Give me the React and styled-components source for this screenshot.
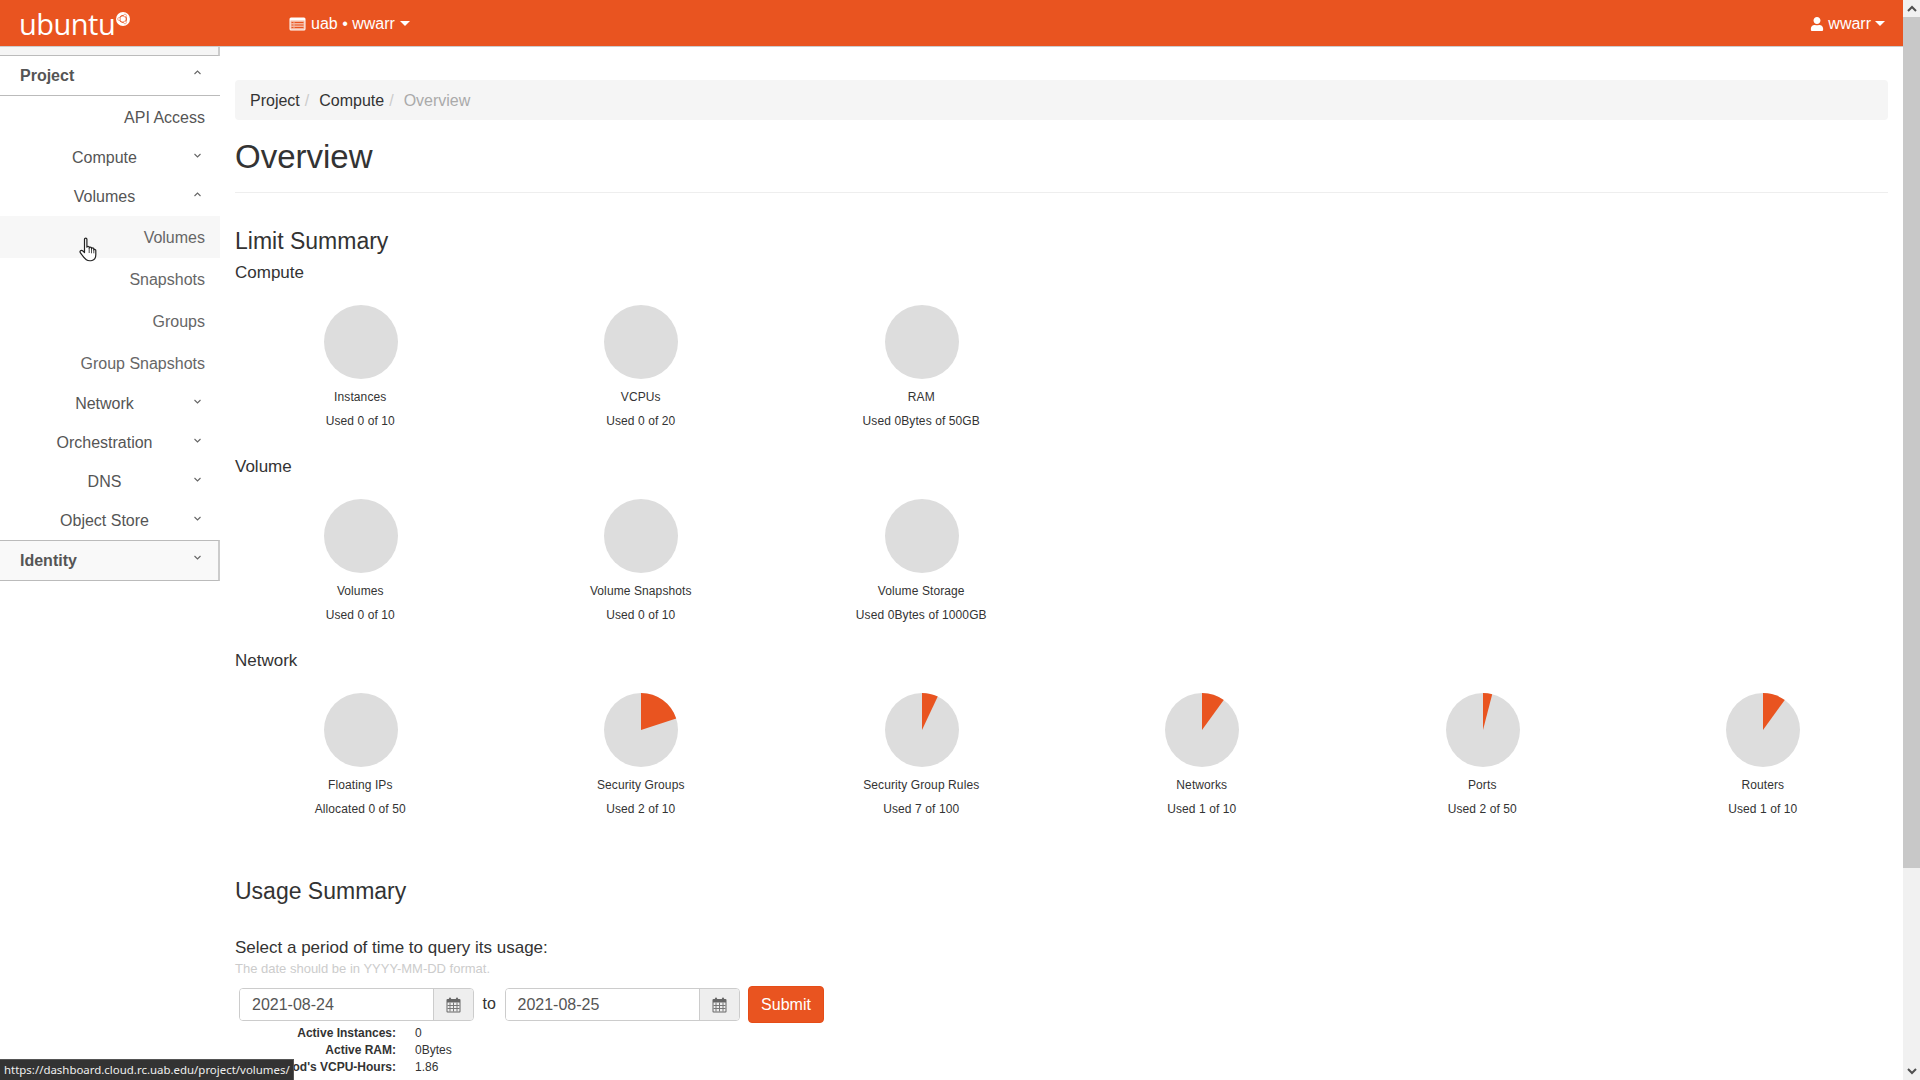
import React from 'react';
import styled, { createGlobalStyle } from 'styled-components';
import { FaUser } from 'react-icons/fa';

const ORANGE = '#e95420';

const GlobalStyle = createGlobalStyle`
  * { box-sizing: border-box; }
  html, body { margin: 0; height: 100%; overflow: hidden; background: #fff; }
  body { font-family: "Liberation Sans", Arial, sans-serif; font-size: 16px; color: #333; }
`;

const Viewport = styled.div`
  display: flex;
  height: 100vh;
  overflow: hidden;
`;

const Page = styled.div`
  flex: 1;
  min-width: 0;
  display: flex;
  flex-direction: column;
`;

const Navbar = styled.header`
  flex: none;
  height: 47px;
  background: ${ORANGE};
  border-bottom: 1px solid #ccc;
  display: flex;
  align-items: center;
  color: #fff;
  padding: 1px 18px 0 19px;
`;

const Brand = styled.div`
  display: flex;
  align-items: flex-start;
  width: 270px;
`;

const BrandText = styled.span`
  font-family: "Open Sans", sans-serif;
  font-weight: 400;
  font-size: 29px;
  line-height: 38px;
  letter-spacing: -0.5px;
`;

const BrandMark = styled.svg`
  width: 14px;
  height: 14px;
  margin: 7px 0 0 1px;
`;

const NavMenu = styled.div`
  display: flex;
  align-items: center;
  gap: ${(p) => p.$gap || '5px'};
  font-size: 16px;
  svg { flex: none; }
`;

const Caret = styled.span`
  width: 0;
  height: 0;
  border-top: 5px solid #fff;
  border-left: 5px solid transparent;
  border-right: 5px solid transparent;
`;

const Spacer = styled.div`
  flex: 1;
`;

const Body = styled.div`
  flex: 1;
  min-height: 0;
  display: flex;
`;

const Sidebar = styled.nav`
  flex: none;
  width: 220px;
  color: #555;
`;

const SidebarCap = styled.div`
  height: 9px;
  background: #f5f5f5;
  border-bottom: 1px solid #bbb;
  border-right: 2px solid #ccc;
`;

const Dashboard = styled.div`
  display: flex;
  align-items: center;
  justify-content: space-between;
  height: ${(p) => (p.$open ? '40px' : '41px')};
  padding: 0 ${(p) => (p.$open ? '19px' : '17px')} 0 20px;
  font-weight: bold;
  background: ${(p) => (p.$open ? '#fff' : '#f9f9f9')};
  border-bottom: 1px solid #bbb;
  ${(p) => !p.$open && 'border-top: 1px solid #bbb; border-right: 2px solid #ccc;'}
`;

const Panel = styled.div`
  display: flex;
  align-items: center;
  height: 39px;
  padding: 1px 19px 0 15px;
`;

const PanelLabel = styled.span`
  flex: 1;
  text-align: center;
`;

const Leaf = styled.div`
  position: relative;
  height: 42px;
  line-height: 44px;
  padding-right: 15px;
  text-align: right;
  color: ${(p) => (p.$top ? '#555' : '#666')};
  background: ${(p) => (p.$hover ? '#f7f7f7' : 'transparent')};
`;

const Cursor = styled.svg`
  position: absolute;
  left: 79px;
  top: 21px;
  width: 19px;
  height: 25px;
`;

const Chevron = styled.svg`
  flex: none;
  width: 7px;
  height: 5px;
  margin-bottom: 6px;
  fill: none;
  stroke: #666;
  stroke-width: 1.1;
`;

const Main = styled.main`
  flex: 1;
  min-width: 0;
  overflow: hidden;
  padding: 33px 15px 0;
`;

const Breadcrumb = styled.ol`
  display: flex;
  align-items: center;
  height: 40px;
  margin: 0 0 17px;
  padding: 1px 15px 0;
  list-style: none;
  background: #f5f5f5;
  border-radius: 4px;
`;

const Crumb = styled.li`
  color: ${(p) => (p.$active ? '#aaa' : '#333')};
  &:not(:first-child)::before {
    content: '/';
    padding: 0 5px;
    margin-right: 5px;
    color: #ccc;
  }
`;

const PageHeader = styled.h1`
  margin: 0 0 36px;
  padding-bottom: 15px;
  border-bottom: 1px solid #eee;
  font-size: 33px;
  font-weight: normal;
  line-height: 40px;
`;

const SectionTitle = styled.h2`
  margin: ${(p) => p.$top || 0} 0 9px;
  font-size: 23px;
  font-weight: normal;
  line-height: 25px;
`;

const GroupTitle = styled.h3`
  margin: 0 0 22px;
  font-size: 17px;
  font-weight: normal;
  line-height: 20px;
`;

const PieRow = styled.div`
  display: grid;
  grid-template-columns: repeat(6, 1fr);
  margin: 0 -15px;
  padding-bottom: 27px;
`;

const PieCell = styled.div`
  display: flex;
  flex-direction: column;
  align-items: center;
  font-size: 12px;
  line-height: 17px;
  letter-spacing: 0.1px;
`;

const PieSvg = styled.svg`
  width: 74px;
  height: 74px;
  margin: 0 0 10px 1px;
`;

const PieUsed = styled.div`
  margin-top: 7px;
`;

const Prompt = styled.p`
  margin: 35px 0 5px;
  font-size: 17px;
  line-height: 18px;
`;

const Hint = styled.p`
  margin: 0 0 10px;
  font-size: 13px;
  line-height: 14px;
  color: #ccc;
`;

const DateForm = styled.form`
  display: flex;
  align-items: center;
  height: 37px;
  padding-left: 4px;
`;

const DateGroup = styled.div`
  display: flex;
  width: 235px;
  height: 33px;
  border: 1px solid #ccc;
  border-radius: 4px;
  overflow: hidden;
`;

const DateInput = styled.input`
  flex: 1;
  min-width: 0;
  border: 0;
  padding: 0 12px;
  outline: 0;
  font: 16px "Liberation Sans", Arial, sans-serif;
  color: #555;
`;

const DateAddon = styled.span`
  flex: none;
  width: 40px;
  display: flex;
  align-items: center;
  justify-content: center;
  background: #eee;
  border-left: 1px solid #ccc;
`;

const To = styled.span`
  width: 30.5px;
  text-align: center;
  padding-bottom: 2px;
`;

const Submit = styled.button`
  height: 37px;
  width: 76px;
  margin-left: 8.5px;
  border: 1px solid #e64c17;
  border-radius: 4px;
  background: ${ORANGE};
  color: #fff;
  font: 16px "Liberation Sans", Arial, sans-serif;
`;

const Stats = styled.dl`
  display: grid;
  grid-template-columns: 161px 1fr;
  column-gap: 19px;
  margin: 2px 0 0;
  font-size: 12px;
  line-height: 17px;
`;

const StatLabel = styled.dt`
  font-weight: bold;
  text-align: right;
  white-space: nowrap;
`;

const StatValue = styled.dd`
  margin: 0;
`;

const LinkStatus = styled.div`
  position: fixed;
  left: 0;
  bottom: 0;
  height: 21px;
  width: 294px;
  padding: 0 4px;
  background: #333;
  border-top: 1px solid #555;
  border-right: 1px solid #555;
  color: #eee;
  font-family: "Noto Sans", "Open Sans", sans-serif;
  font-size: 11.45px;
  line-height: 19px;
  white-space: nowrap;
`;

const Scrollbar = styled.div`
  flex: none;
  width: 17px;
  display: flex;
  flex-direction: column;
  background: #f1f1f1;
`;

const ScrollButton = styled.div`
  flex: none;
  height: 17px;
  display: flex;
  align-items: center;
  justify-content: center;
`;

const ScrollThumb = styled.div`
  flex: none;
  height: 851px;
  background: #c8c8c8;
`;

const ScrollTrack = styled.div`
  flex: 1;
`;

const ScrollArrow = styled.svg`
  width: 10px;
  height: 7px;
  fill: none;
  stroke: #505050;
  stroke-width: 2;
`;

const ChevronIcon = ({ up }) => (
  <Chevron viewBox="0 0 7 5">
    <path d={up ? 'M0.5 4L3.5 1L6.5 4' : 'M0.5 1L3.5 4L6.5 1'} />
  </Chevron>
);

const UbuntuMark = () => (
  <BrandMark viewBox="0 0 30 30">
    <circle cx="15" cy="15" r="15" fill="#fff" />
    <circle cx="15" cy="15" r="7.2" fill="none" stroke={ORANGE} strokeWidth="2.6" />
    <circle cx="6.4" cy="15" r="3" fill="#fff" stroke={ORANGE} strokeWidth="1" />
    <circle cx="19.3" cy="7.6" r="3" fill="#fff" stroke={ORANGE} strokeWidth="1" />
    <circle cx="19.3" cy="22.4" r="3" fill="#fff" stroke={ORANGE} strokeWidth="1" />
  </BrandMark>
);

const TenantIcon = () => (
  <svg width="17" height="14" viewBox="0 0 17 14">
    <rect x="0.5" y="0.5" width="16" height="13" rx="1.5" fill="#fff" />
    <rect x="1.5" y="3.5" width="14" height="9" fill="#f4b49c" />
    <path d="M2.5 5.500h2M2.500 8h2M2.500 10.500h2" stroke={ORANGE} strokeWidth="1.200" />
    <path d="M5.500 5.500h9M5.500 8h9M5.500 10.500h9" stroke={ORANGE} strokeWidth="1.200" />
  </svg>
);

const HandCursor = () => (
  <Cursor viewBox="0 0 19 25">
    <path
      d="M5.5 2.2c0-1.5 2.4-1.5 2.4 0v8c0-1.3 2.3-1.3 2.3 0v.8c0-1.3 2.3-1.3 2.3 0v.8c0-1.3 2.3-1.3 2.3 0v1c.6-.7 2-.3 2 .8v4.200c0 2.600-1.200 5.200-3.800 5.700-2 .4-4.300.2-5.700-.8-1.500-1.100-5.200-5.900-6-7.100-1-1.500.9-3 2.300-1.800l1.900 1.700z"
      fill="#fff"
      stroke="#222"
      strokeWidth="1.200"
      strokeLinejoin="round"
    />
    <path d="M10.200 11v5M12.500 11.800v4.500M14.800 12.600v3.700" stroke="#222" strokeWidth="0.800" fill="none" />
  </Cursor>
);

const CalendarIcon = () => (
  <svg width="15" height="16" viewBox="0 0 15 16">
    <rect x="0.5" y="2" width="14" height="13.500" rx="1" fill="#666" />
    <rect x="1.500" y="5.500" width="12" height="9" fill="#eee" />
    <path d="M4 5.500v9M7.500 5.500v9M11 5.500v9M1.500 8.500h12M1.500 11.500h12" stroke="#777" strokeWidth="1" />
    <rect x="3" y="0.500" width="2" height="4" rx="1" fill="#666" />
    <rect x="10" y="0.500" width="2" height="4" rx="1" fill="#666" />
  </svg>
);

const Pie = ({ used, total }) => {
  const angle = (used / total) * 2 * Math.PI;
  const x = 37 + 37 * Math.sin(angle);
  const y = 37 - 37 * Math.cos(angle);
  return (
    <PieSvg viewBox="0 0 74 74">
      <circle cx="37" cy="37" r="37" fill="#ddd" />
      {used > 0 && <path d={`M37 37L37 0A37 37 0 0 1 ${x} ${y}Z`} fill={ORANGE} />}
    </PieSvg>
  );
};

const limits = [
  {
    title: 'Compute',
    pies: [
      { name: 'Instances', text: 'Used 0 of 10', used: 0, total: 10 },
      { name: 'VCPUs', text: 'Used 0 of 20', used: 0, total: 20 },
      { name: 'RAM', text: 'Used 0Bytes of 50GB', used: 0, total: 50 },
    ],
  },
  {
    title: 'Volume',
    pies: [
      { name: 'Volumes', text: 'Used 0 of 10', used: 0, total: 10 },
      { name: 'Volume Snapshots', text: 'Used 0 of 10', used: 0, total: 10 },
      { name: 'Volume Storage', text: 'Used 0Bytes of 1000GB', used: 0, total: 1000 },
    ],
  },
  {
    title: 'Network',
    pies: [
      { name: 'Floating IPs', text: 'Allocated 0 of 50', used: 0, total: 50 },
      { name: 'Security Groups', text: 'Used 2 of 10', used: 2, total: 10 },
      { name: 'Security Group Rules', text: 'Used 7 of 100', used: 7, total: 100 },
      { name: 'Networks', text: 'Used 1 of 10', used: 1, total: 10 },
      { name: 'Ports', text: 'Used 2 of 50', used: 2, total: 50 },
      { name: 'Routers', text: 'Used 1 of 10', used: 1, total: 10 },
    ],
  },
];

const DateField = ({ value }) => (
  <DateGroup>
    <DateInput defaultValue={value} />
    <DateAddon>
      <CalendarIcon />
    </DateAddon>
  </DateGroup>
);

export default function App() {
  return (
    <Viewport>
      <GlobalStyle />
      <Page>
        <Navbar>
          <Brand>
            <BrandText>ubuntu</BrandText>
            <UbuntuMark />
          </Brand>
          <NavMenu>
            <TenantIcon />
            <span>uab • wwarr</span>
            <Caret />
          </NavMenu>
          <Spacer />
          <NavMenu $gap="4px">
            <FaUser size={14} />
            <span>wwarr</span>
            <Caret />
          </NavMenu>
        </Navbar>
        <Body>
          <Sidebar>
            <SidebarCap />
            <Dashboard $open>
              Project
              <ChevronIcon up />
            </Dashboard>
            <Leaf $top>API Access</Leaf>
            <Panel>
              <PanelLabel>Compute</PanelLabel>
              <ChevronIcon />
            </Panel>
            <Panel>
              <PanelLabel>Volumes</PanelLabel>
              <ChevronIcon up />
            </Panel>
            <Leaf $hover>
              Volumes
              <HandCursor />
            </Leaf>
            <Leaf>Snapshots</Leaf>
            <Leaf>Groups</Leaf>
            <Leaf>Group Snapshots</Leaf>
            <Panel>
              <PanelLabel>Network</PanelLabel>
              <ChevronIcon />
            </Panel>
            <Panel>
              <PanelLabel>Orchestration</PanelLabel>
              <ChevronIcon />
            </Panel>
            <Panel>
              <PanelLabel>DNS</PanelLabel>
              <ChevronIcon />
            </Panel>
            <Panel>
              <PanelLabel>Object Store</PanelLabel>
              <ChevronIcon />
            </Panel>
            <Dashboard>
              Identity
              <ChevronIcon />
            </Dashboard>
          </Sidebar>
          <Main>
            <Breadcrumb>
              <Crumb>Project</Crumb>
              <Crumb>Compute</Crumb>
              <Crumb $active>Overview</Crumb>
            </Breadcrumb>
            <PageHeader>Overview</PageHeader>
            <SectionTitle>Limit Summary</SectionTitle>
            {limits.map((group) => (
              <section key={group.title}>
                <GroupTitle>{group.title}</GroupTitle>
                <PieRow>
                  {group.pies.map((pie) => (
                    <PieCell key={pie.name}>
                      <Pie used={pie.used} total={pie.total} />
                      <div>{pie.name}</div>
                      <PieUsed>{pie.text}</PieUsed>
                    </PieCell>
                  ))}
                </PieRow>
              </section>
            ))}
            <SectionTitle $top="34px">Usage Summary</SectionTitle>
            <Prompt>Select a period of time to query its usage:</Prompt>
            <Hint>The date should be in YYYY-MM-DD format.</Hint>
            <DateForm>
              <DateField value="2021-08-24" />
              <To>to</To>
              <DateField value="2021-08-25" />
              <Submit type="button">Submit</Submit>
            </DateForm>
            <Stats>
              <StatLabel>Active Instances:</StatLabel>
              <StatValue>0</StatValue>
              <StatLabel>Active RAM:</StatLabel>
              <StatValue>0Bytes</StatValue>
              <StatLabel>This Period's VCPU-Hours:</StatLabel>
              <StatValue>1.86</StatValue>
            </Stats>
          </Main>
        </Body>
      </Page>
      <Scrollbar>
        <ScrollButton>
          <ScrollArrow viewBox="0 0 10 7">
            <path d="M1 6L5 2L9 6" />
          </ScrollArrow>
        </ScrollButton>
        <ScrollThumb />
        <ScrollTrack />
        <ScrollButton>
          <ScrollArrow viewBox="0 0 10 7">
            <path d="M1 1L5 5L9 1" />
          </ScrollArrow>
        </ScrollButton>
      </Scrollbar>
      <LinkStatus>https://dashboard.cloud.rc.uab.edu/project/volumes/</LinkStatus>
    </Viewport>
  );
}
